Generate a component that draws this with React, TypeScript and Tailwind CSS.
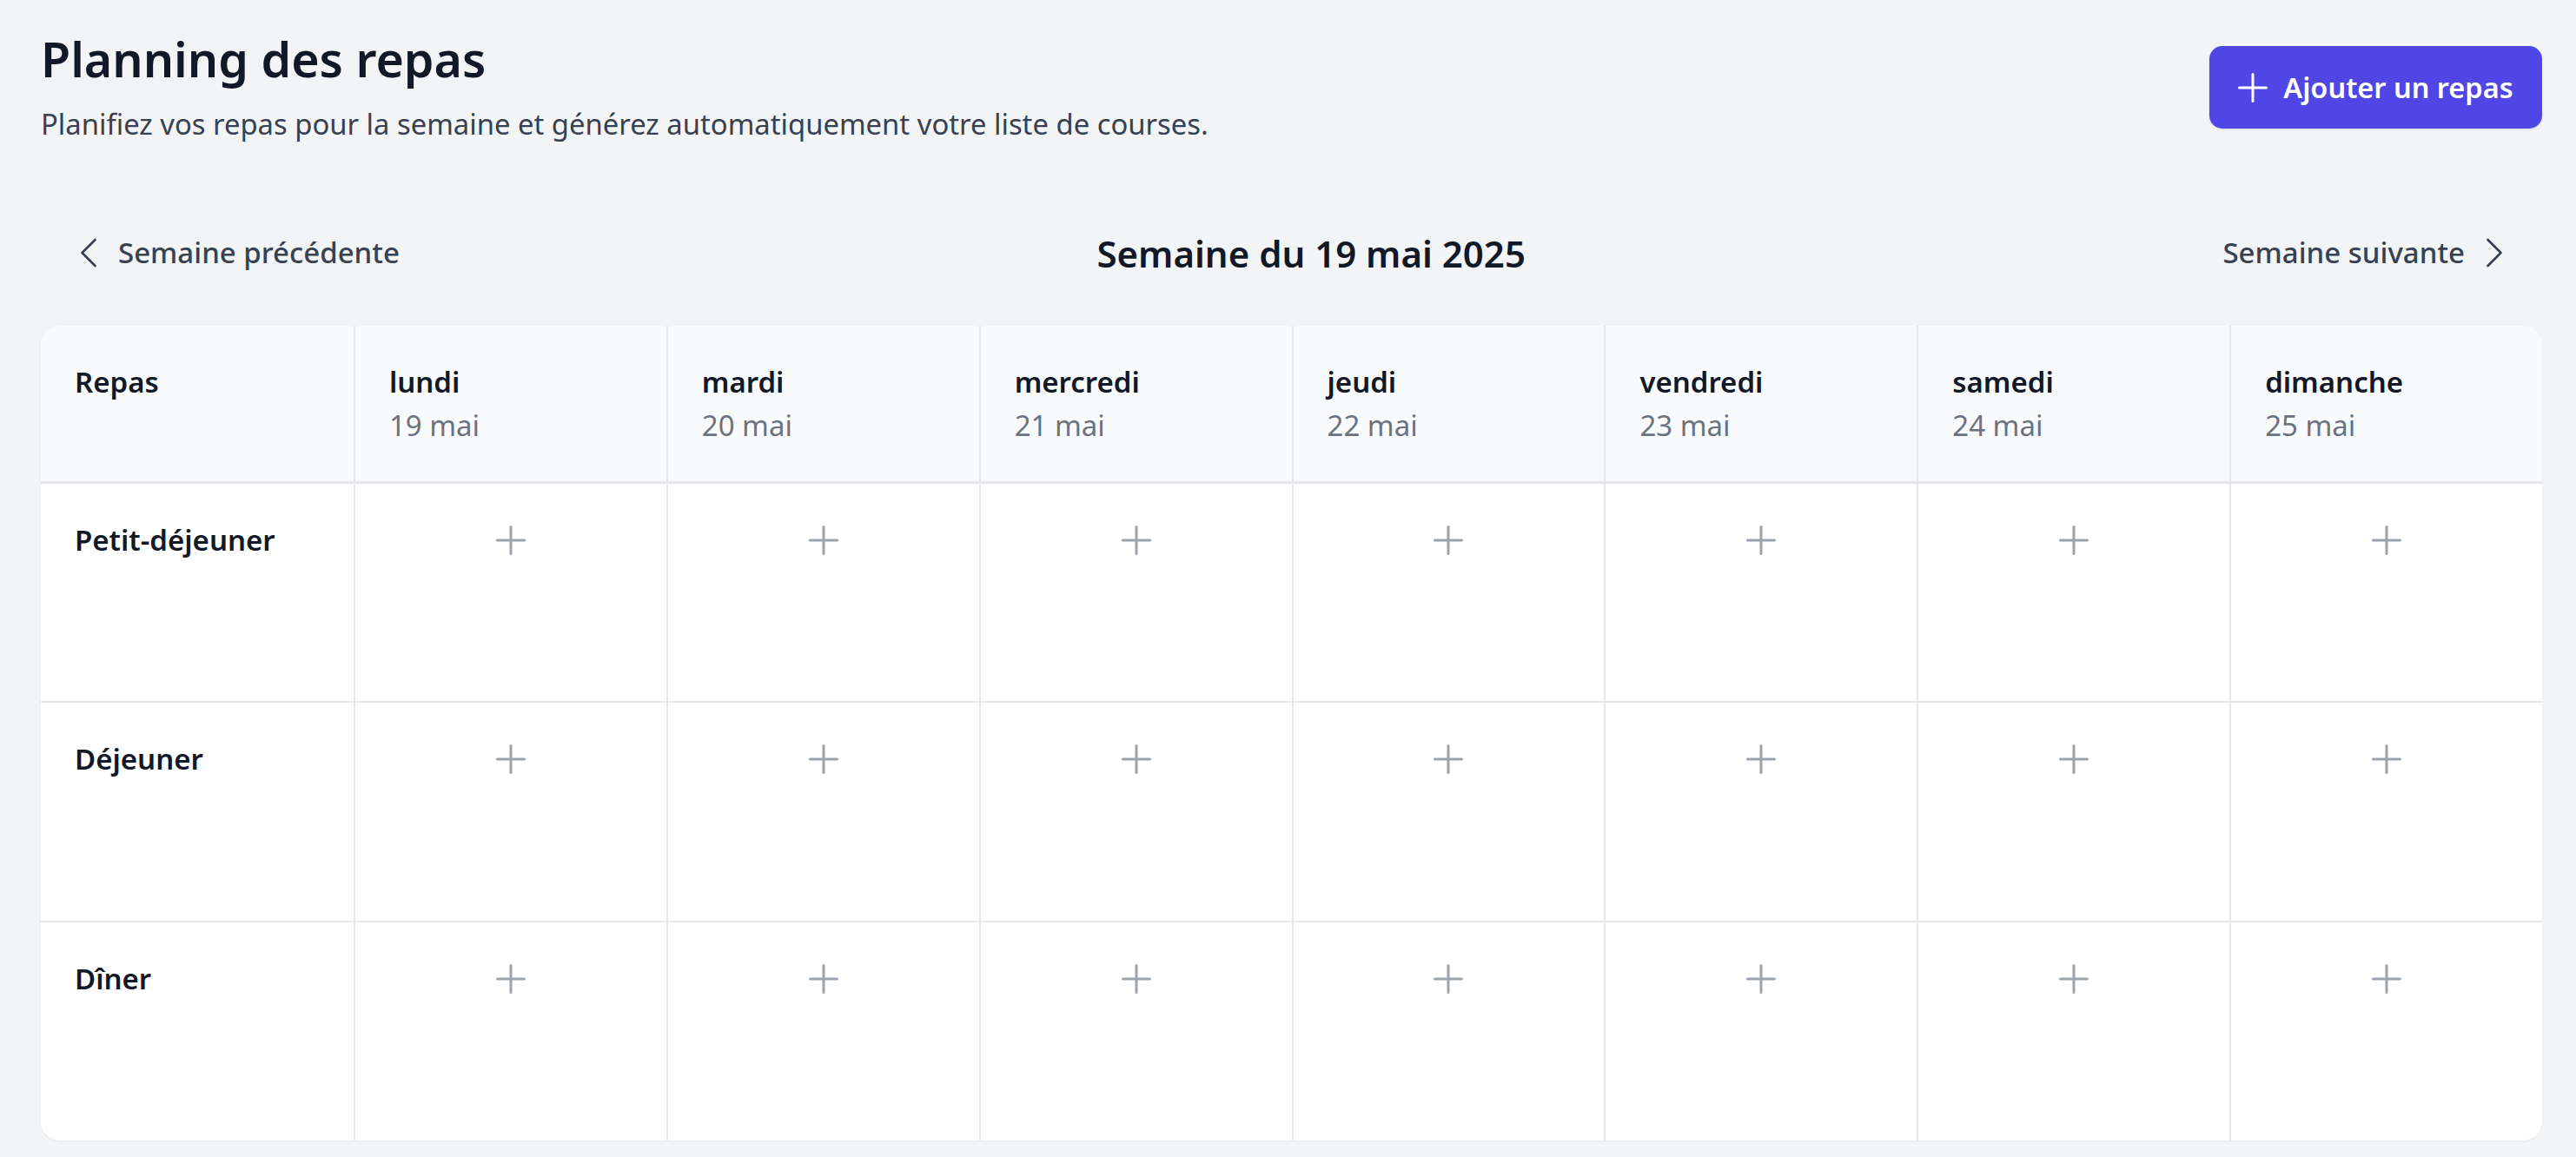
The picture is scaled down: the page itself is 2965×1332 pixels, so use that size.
import React from "react";

const days = [
  { name: "lundi", date: "19 mai" },
  { name: "mardi", date: "20 mai" },
  { name: "mercredi", date: "21 mai" },
  { name: "jeudi", date: "22 mai" },
  { name: "vendredi", date: "23 mai" },
  { name: "samedi", date: "24 mai" },
  { name: "dimanche", date: "25 mai" },
];

const meals = ["Petit-déjeuner", "Déjeuner", "Dîner"];

const PlusIcon = ({ className }: { className?: string }) => (
  <svg viewBox="0 0 34 34" className={className} fill="none" stroke="currentColor" strokeLinecap="round">
    <path d="M17 1.5v31M1.5 17h31" strokeWidth="3" />
  </svg>
);

const Chevron = ({ dir }: { dir: "left" | "right" }) => (
  <svg viewBox="0 0 20 34" className="w-[20px] h-[34px] text-[#374151]" fill="none" stroke="currentColor" strokeWidth="2.7" strokeLinecap="round" strokeLinejoin="round">
    {dir === "left" ? <path d="M17.5 2 2.5 17l15 15" /> : <path d="m2.5 2 15 15-15 15" />}
  </svg>
);

export default function App() {
  return (
    <div className="min-h-screen bg-[#f3f4f6] pl-[47px] pr-[39px] font-['Noto_Sans',sans-serif] text-[#111827]">
      <div className="flex justify-between items-start">
        <div className="pt-[32px]">
          <h1 className="text-[55.5px] leading-[72px] font-semibold">Planning des repas</h1>
          <p className="mt-[17px] text-[32.8px] leading-[44px] text-[#374151]">
            Planifiez vos repas pour la semaine et générez automatiquement votre liste de courses.
          </p>
        </div>
        <button className="mt-[53px] w-[383px] h-[95px] flex items-center justify-center gap-[18px] rounded-[15px] bg-[#4f46e5] text-white shadow-[0_1px_3px_rgba(0,0,0,0.12)]">
          <PlusIcon className="w-[34px] h-[34px]" />
          <span className="text-[32.5px] font-semibold leading-[44px]">Ajouter un repas</span>
        </button>
      </div>

      <div className="mt-[84px] h-[84px] flex items-center justify-between pl-[45px] pr-[45px]">
        <button className="flex items-center gap-[24px] text-[33px] font-medium text-[#374151]">
          <Chevron dir="left" />
          <span>Semaine précédente</span>
        </button>
        <h2 className="text-[42px] font-semibold text-[#111827]">Semaine du 19 mai 2025</h2>
        <button className="flex items-center gap-[24px] text-[33px] font-medium text-[#374151]">
          <span>Semaine suivante</span>
          <Chevron dir="right" />
        </button>
      </div>

      <div className="mt-[42px] mb-[17px] bg-white rounded-[22px] overflow-hidden shadow-[0_1px_3px_rgba(0,0,0,0.05)] grid grid-cols-8">
        <div className="h-[182px] bg-[#f9fafb] border-b-[3px] border-[#e5e7eb] pl-[39px] pt-[40px] text-[33px] leading-[50px] font-semibold">
          Repas
        </div>
        {days.map((d) => (
          <div key={d.name} className="h-[182px] bg-[#f9fafb] border-b-[3px] border-l-2 border-[#e5e7eb] pl-[39px] pt-[40px] text-[33px] leading-[50px]">
            <div className="font-semibold">{d.name}</div>
            <div className="text-[#6b7280]">{d.date}</div>
          </div>
        ))}

        {meals.map((m, i) => (
          <React.Fragment key={m}>
            <div className={`${i === 0 ? "h-[250px]" : "h-[253px] border-t-2"} border-[#e5e7eb] pl-[39px] pt-[40px] text-[33px] leading-[50px] font-semibold`}>
              {m}
            </div>
            {days.map((d) => (
              <div key={d.name} className={`${i === 0 ? "h-[250px]" : "h-[253px] border-t-2"} border-l-2 border-[#e5e7eb] flex justify-center pt-[48px]`}>
                <button className="h-[34px] text-[#9ca3af]">
                  <PlusIcon className="w-[34px] h-[34px]" />
                </button>
              </div>
            ))}
          </React.Fragment>
        ))}
      </div>
    </div>
  );
}
